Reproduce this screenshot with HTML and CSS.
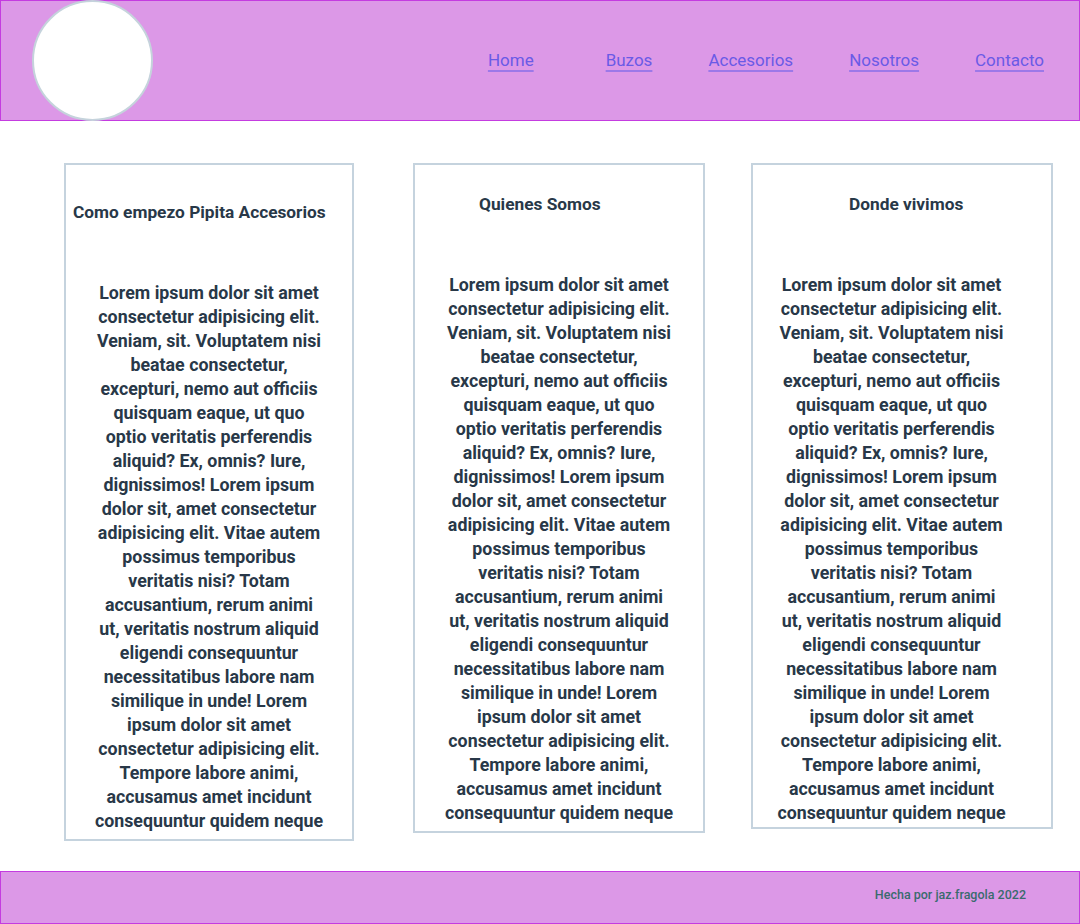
FILE: index.html
```html
<!DOCTYPE html>
<html lang="es">
<head>
<meta charset="utf-8">
<title>Pipita Accesorios</title>
<link rel="stylesheet" href="styles.css">
</head>
<body>
<header class="site-header">
  <div class="logo"></div>
  <nav class="nav">
    <a class="nav-link nav-link--home" href="#">Home</a>
    <a class="nav-link" href="#">Buzos</a>
    <a class="nav-link" href="#">Accesorios</a>
    <a class="nav-link" href="#">Nosotros</a>
    <a class="nav-link" href="#">Contacto</a>
  </nav>
</header>
<main class="cards">
  <section class="card card--one">
    <h2 class="card-title">Como empezo Pipita Accesorios</h2>
    <p class="card-text">Lorem ipsum dolor sit amet consectetur adipisicing elit. Veniam, sit. Voluptatem nisi beatae consectetur, excepturi, nemo aut officiis quisquam eaque, ut quo optio veritatis perferendis aliquid? Ex, omnis? Iure, dignissimos! Lorem ipsum dolor sit, amet consectetur adipisicing elit. Vitae autem possimus temporibus veritatis nisi? Totam accusantium, rerum animi ut, veritatis nostrum aliquid eligendi consequuntur necessitatibus labore nam similique in unde! Lorem ipsum dolor sit amet consectetur adipisicing elit. Tempore labore animi, accusamus amet incidunt consequuntur quidem neque</p>
  </section>
  <section class="card card--two">
    <h2 class="card-title">Quienes Somos</h2>
    <p class="card-text">Lorem ipsum dolor sit amet consectetur adipisicing elit. Veniam, sit. Voluptatem nisi beatae consectetur, excepturi, nemo aut officiis quisquam eaque, ut quo optio veritatis perferendis aliquid? Ex, omnis? Iure, dignissimos! Lorem ipsum dolor sit, amet consectetur adipisicing elit. Vitae autem possimus temporibus veritatis nisi? Totam accusantium, rerum animi ut, veritatis nostrum aliquid eligendi consequuntur necessitatibus labore nam similique in unde! Lorem ipsum dolor sit amet consectetur adipisicing elit. Tempore labore animi, accusamus amet incidunt consequuntur quidem neque</p>
  </section>
  <section class="card card--three">
    <h2 class="card-title">Donde vivimos</h2>
    <p class="card-text">Lorem ipsum dolor sit amet consectetur adipisicing elit. Veniam, sit. Voluptatem nisi beatae consectetur, excepturi, nemo aut officiis quisquam eaque, ut quo optio veritatis perferendis aliquid? Ex, omnis? Iure, dignissimos! Lorem ipsum dolor sit, amet consectetur adipisicing elit. Vitae autem possimus temporibus veritatis nisi? Totam accusantium, rerum animi ut, veritatis nostrum aliquid eligendi consequuntur necessitatibus labore nam similique in unde! Lorem ipsum dolor sit amet consectetur adipisicing elit. Tempore labore animi, accusamus amet incidunt consequuntur quidem neque</p>
  </section>
</main>
<footer class="site-footer">
  <p class="footer-text">Hecha por jaz.fragola 2022</p>
</footer>
</body>
</html>
```
FILE: styles.css
```css
* { box-sizing: border-box; }

body {
  margin: 0;
  font-family: Roboto, "Liberation Sans", sans-serif;
  color: #283848;
  background: #ffffff;
}

.site-header {
  height: 121px;
  background: #dc98e7;
  border: 1px solid #c43ce0;
  display: flex;
  align-items: center;
  justify-content: space-between;
  padding: 0 35px 2px 31px;
}

.logo {
  width: 121px;
  height: 121px;
  border-radius: 50%;
  background: #ffffff;
  border: 2px solid #c5d3dc;
  align-self: flex-start;
  margin-top: -1px;
}

.nav {
  display: flex;
  align-items: center;
  gap: 56px;
}

.nav-link {
  font-size: 17px;
  color: #6a5ae6;
  text-decoration: underline;
  text-decoration-color: #9c78e8;
  text-decoration-thickness: 2px;
  text-underline-offset: 4px;
}

.nav-link--home { margin-right: 16px; }

.cards {
  display: flex;
  align-items: flex-start;
  padding: 42px 0 30px 64px;
}

.card {
  border: 2px solid #c5d3de;
  background: #ffffff;
  padding: 0 0 6px;
}

.card--one { width: 290px; margin-right: 59px; }
.card--two { width: 292px; margin-right: 46px; }
.card--three { width: 302px; padding-bottom: 2px; }

.card-title {
  font-size: 17.3px;
  font-weight: 700;
  line-height: 24px;
  margin: 27px 0 57px;
}

.card--one .card-title { margin-top: 35px; padding-left: 7px; }
.card--two .card-title { padding-left: 64px; }
.card--three .card-title { padding-left: 96px; }

.card-text {
  font-size: 17.8px;
  font-weight: 700;
  line-height: 24px;
  text-align: center;
  margin: 0 auto;
  width: 231px;
}

.card--three .card-text { margin-left: 23px; }

.site-footer {
  height: 53px;
  background: #dc98e7;
  border: 1px solid #c43ce0;
  display: flex;
  align-items: center;
  justify-content: flex-end;
  padding: 0 53px 7px 0;
}

.footer-text {
  margin: 0;
  font-size: 12.5px;
  font-weight: 500;
  color: #3a6b6e;
}
```
